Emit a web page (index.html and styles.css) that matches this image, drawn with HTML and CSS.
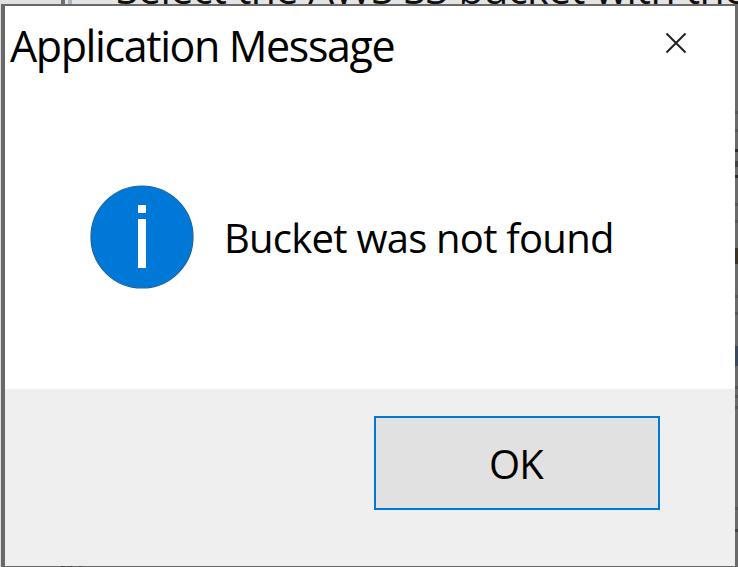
FILE: index.html
```html
<!DOCTYPE html>
<html lang="en">
<head>
<meta charset="utf-8">
<title>Application Message</title>
<link rel="stylesheet" href="styles.css">
</head>
<body>
<div class="backdrop"><p class="backdrop-text">Select the AWS S3 bucket with the</p></div>
<div class="dialog">
  <header class="titlebar">
    <h1 class="title">Application Message</h1>
    <svg class="close" width="22" height="22" viewBox="0 0 22 22"><path d="M1.500 1.500 20.500 20.500M20.500 1.500 1.500 20.500" fill="none" stroke="#222" stroke-width="2"/></svg>
  </header>
  <main class="content">
    <svg class="info" width="104" height="104" viewBox="0 0 104 104">
      <circle cx="52" cy="52" r="51" fill="#0078d7" stroke="#17649f" stroke-width="1.200"/>
      <rect x="48" y="20" width="8" height="8" fill="#fff"/>
      <rect x="48" y="34" width="8" height="49" fill="#fff"/>
    </svg>
    <p class="message">Bucket was not found</p>
  </main>
  <footer class="actions">
    <button class="ok" type="button">OK</button>
  </footer>
  <div class="edge-right"></div>
  <div class="edge-bottom"></div>
</div>
</body>
</html>
```
FILE: styles.css
```css
html, body {
  margin: 0;
  padding: 0;
  width: 738px;
  height: 567px;
  overflow: hidden;
  font-family: "Open Sans", "Noto Sans", sans-serif;
}
body {
  background: linear-gradient(90deg, #e0e0e0 0 61px, #6e6e6e 61px 65px, #e6e6e6 65px 68px, #a9b6c2 68px 72px, #e4e4e4 72px);
}
.backdrop-text {
  position: absolute;
  left: 116px;
  top: -33px;
  margin: 0;
  font-size: 41px;
  line-height: 42px;
  letter-spacing: -0.45px;
  white-space: nowrap;
  color: #111;
}
.dialog {
  position: absolute;
  left: 1px;
  top: 4px;
  width: 737px;
  height: 563px;
  box-sizing: border-box;
  border-style: solid;
  border-color: #696969;
  border-width: 2px 3px 1px 4px;
  display: flex;
  flex-direction: column;
  background: #fff;
}
.edge-right {
  position: absolute;
  top: -2px;
  right: -3px;
  bottom: -1px;
  width: 3px;
  background: linear-gradient(180deg,
    #6b6b6b 0 107px,
    #585858 107px 110px, #6b6b6b 110px 125px,
    #585858 125px 128px, #6b6b6b 128px 145px,
    #2c2c2c 145px 148px, #6b6b6b 148px 157px,
    #444 157px 163px, #6b6b6b 163px 171px,
    #2c2c2c 171px 174px, #6b6b6b 174px 199px,
    #585858 199px 202px, #6b6b6b 202px 216px,
    #585858 216px 219px, #6b6b6b 219px 244px,
    #3d3428 244px 260px, #6b6b6b 260px 291px,
    #585858 291px 294px, #6b6b6b 294px 308px,
    #585858 308px 311px, #6b6b6b 311px 342px,
    #3c4a5c 342px 362px, #6b6b6b 362px 382px,
    #585858 382px 385px, #6b6b6b 385px 391px,
    #585858 391px 394px, #6b6b6b 394px 402px,
    #585858 402px 405px, #6b6b6b 405px 503px,
    #585858 503px 506px, #6b6b6b 506px 525px,
    #444 525px 528px, #6b6b6b 528px);
}
.edge-bottom {
  position: absolute;
  left: -4px;
  right: -3px;
  bottom: -1px;
  height: 1px;
  background: linear-gradient(90deg,
    #696969 0 60px, #444 60px 64px, #696969 64px 67px,
    #505050 67px 71px, #696969 71px 78px, #444 78px 81px, #696969 81px);
}
.titlebar {
  height: 78px;
  display: flex;
  align-items: flex-start;
  justify-content: space-between;
  padding: 0 48px 0 5px;
}
.title {
  margin: 11px 0 0;
  font-size: 43px;
  line-height: 58px;
  font-weight: 400;
  letter-spacing: -1.4px;
  color: #000;
}
.close { margin-top: 26px; }
.content {
  height: 305px;
  display: flex;
  align-items: center;
  gap: 31px;
  padding-left: 85px;
}
.message {
  margin: 2px 0 0 -1px;
  font-size: 40px;
  letter-spacing: -0.75px;
  color: #000;
}
.actions {
  flex: 1;
  background: #efefef;
  padding: 27px 0 0 369px;
}
.ok {
  width: 286px;
  height: 94px;
  box-sizing: border-box;
  border: 2px solid #0078d7;
  background: #e1e1e1;
  font: inherit;
  font-size: 40px;
  letter-spacing: -0.75px;
  color: #000;
  padding: 0 2px 0 0;
}
```
